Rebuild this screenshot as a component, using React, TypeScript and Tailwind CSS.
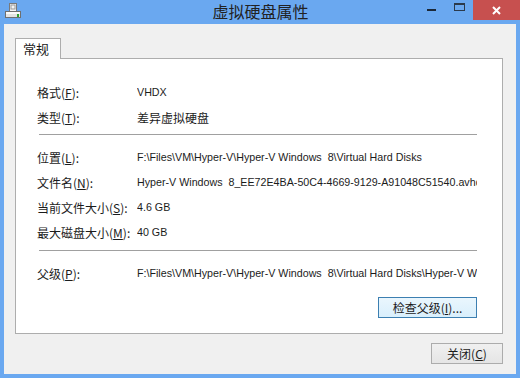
import React from 'react';

const cjk = "font-['Noto_Sans_CJK_SC','Noto_Sans',sans-serif]";
const latin = "font-['Liberation_Sans','Noto_Sans_CJK_SC',sans-serif]";

const DiskIcon: React.FC = () => (
    <svg width="16" height="16" viewBox="0 0 16 16">
        <rect x="4.5" y="0.5" width="7" height="8" fill="#f4f4f4" stroke="#7a7a7a" />
        <rect x="6" y="2" width="4" height="4" fill="none" stroke="#9a9a9a" />
        <rect x="0.5" y="8.5" width="15" height="6" fill="#e4e4e4" stroke="#6f6f6f" />
        <rect x="1" y="9" width="14" height="2" fill="#fafafa" />
        <rect x="12" y="11" width="2" height="3" fill="#2fa12f" />
    </svg>
);

const Label: React.FC<{ text: string; acc: string; after?: string }> = ({ text, acc, after = '):' }) => (
    <span className={`${cjk} w-[100px] shrink-0 text-[12px] text-[#1b1b1b]`}>
        {text}(<u>{acc}</u>{after}
    </span>
);

const Row: React.FC<{ label: React.ReactNode; value: React.ReactNode; cn?: boolean }> = ({ label, value, cn }) => (
    <div className="flex h-[25px] items-center">
        {label}
        <span className={`${cn ? `${cjk} text-[12px]` : `${latin} text-[10.7px]`} w-[340px] overflow-hidden whitespace-pre text-[#1b1b1b]`}>
            {value}
        </span>
    </div>
);

const Button: React.FC<{ children: React.ReactNode; focused?: boolean; className?: string }> = ({ children, focused, className }) => (
    <button
        className={`${cjk} flex h-[21px] items-center justify-center border text-[12px] text-[#1b1b1b] ${focused ? 'border-[#3c7fb1] bg-gradient-to-b from-[#eaf6fd] to-[#d9effc]' : 'border-[#acacac] bg-gradient-to-b from-[#f0f0f0] to-[#e5e5e5]'} ${className ?? ''}`}
    >
        {children}
    </button>
);

const App: React.FC = () => {
    return (
        <div className="flex h-[378px] w-[520px] flex-col bg-[#6aa8f0]">
            {/* Title bar */}
            <div className="flex h-[24px] shrink-0 items-start">
                <div className="ml-[5px] mt-[3px]">
                    <DiskIcon />
                </div>
                <div className={`${cjk} flex-1 pt-[1px] pl-[73px] text-center text-[16px] leading-[21px] text-[#222]`}>虚拟硬盘属性</div>
                <div className="mt-[9px] h-[2px] w-[9px] bg-[#1b2838]" />
                <div className="ml-[18px] mt-[3px] h-[8px] w-[11px] border border-t-2 border-[#2b3a4c]" />
                <div className="ml-[8px] flex h-[20px] w-[47px] items-center justify-center bg-[#c7504f]">
                    <svg width="9" height="9" viewBox="0 0 9 9">
                        <path d="M1 1 L8 8 M8 1 L1 8" stroke="#fff" strokeWidth="2" />
                    </svg>
                </div>
            </div>

            {/* Client area */}
            <div className="mx-[4px] mb-[4px] flex flex-1 flex-col bg-[#f0f0f0] px-[11px] pt-[14px]">
                <div className="flex">
                    <div className={`${cjk} relative -mb-px h-[21px] w-[46px] border border-b-0 border-[#adadad] bg-white pl-[7px] text-[13px] leading-[19px] text-[#1b1b1b]`}>
                        常规
                    </div>
                </div>
                <div className="flex h-[276px] w-[488px] flex-col border border-[#adadad] bg-white pl-[21px] pr-[25px] pt-[21px]">
                    <Row label={<Label text="格式" acc="F" />} value="VHDX" />
                    <Row label={<Label text="类型" acc="T" />} value="差异虚拟硬盘" cn />
                    <div className="ml-[2px] mt-[4px] h-px bg-[#a0a0a0]" />
                    <div className="mt-[10px]" />
                    <Row label={<Label text="位置" acc="L" />} value="F:\Files\VM\Hyper-V\Hyper-V Windows  8\Virtual Hard Disks" />
                    <Row label={<Label text="文件名" acc="N" />} value="Hyper-V Windows  8_EE72E4BA-50C4-4669-9129-A91048C51540.avhdx" />
                    <Row label={<Label text="当前文件大小" acc="S" />} value="4.6 GB" />
                    <Row label={<Label text="最大磁盘大小" acc="M" />} value="40 GB" />
                    <div className="ml-[2px] mt-[5px] h-px bg-[#a0a0a0]" />
                    <div className="mt-[10px]" />
                    <Row label={<Label text="父级" acc="P" />} value="F:\Files\VM\Hyper-V\Hyper-V Windows  8\Virtual Hard Disks\Hyper-V Windows  8.vhdx" />
                    <div className="mt-[11px] flex justify-end">
                        <Button focused className="w-[99px]">
                            检查父级(<u>I</u>)...
                        </Button>
                    </div>
                </div>
                <div className="mr-[2px] mt-[9px] flex justify-end">
                    <Button className="w-[72px]">
                        关闭(<u>C</u>)
                    </Button>
                </div>
            </div>
        </div>
    );
};

export default App;
